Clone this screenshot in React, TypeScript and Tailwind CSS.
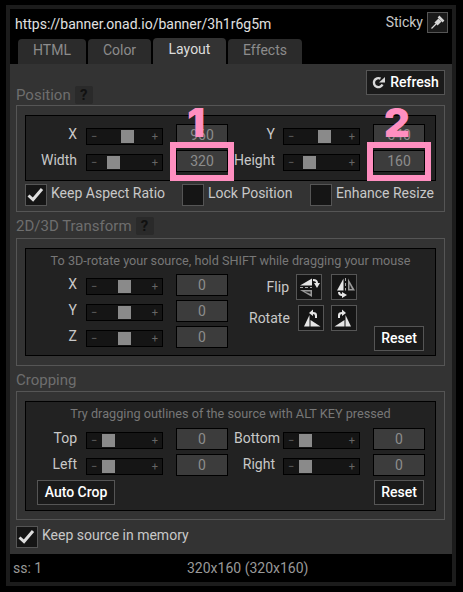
function Slider({ thumb }: { thumb: string }) {
  return (
    <div className="relative mt-[4px] flex h-[17px] w-[77px] items-center justify-between border border-black bg-[#151515] px-[4px] text-[11px] leading-none text-[#666]">
      <span>−</span>
      <span>+</span>
      <div className={`absolute top-[1px] h-[13px] w-[13px] bg-[#8a8a8a] ${thumb}`} />
    </div>
  );
}

function NumBox({ value }: { value: string }) {
  return (
    <div className="flex h-[22px] w-[52px] items-center justify-center border border-black bg-[#3c3c3c] text-[14px] text-[#8c8c8c]">
      {value}
    </div>
  );
}

function Label({ text, className = "w-[51px]" }: { text: string; className?: string }) {
  return <div className={`flex h-[20px] items-center justify-end text-[14px] leading-none whitespace-nowrap text-[#c8c8c8] ${className}`}>{text}</div>;
}

function Row({ label, thumb, value }: { label: string; thumb: string; value: string }) {
  return (
    <div className="flex h-[26px] items-start">
      <Label text={label} />
      <div className="ml-[9px]"><Slider thumb={thumb} /></div>
      <div className="ml-[13px]"><NumBox value={value} /></div>
    </div>
  );
}

function PairRow({ left, right, labelClass = "w-[47px]" }: { left: [string, string, string]; right: [string, string, string]; labelClass?: string }) {
  return (
    <div className="flex h-[26px] items-start">
      <Label text={left[0]} />
      <div className="ml-[9px]"><Slider thumb={left[1]} /></div>
      <div className="ml-[13px]"><NumBox value={left[2]} /></div>
      <Label text={right[0]} className={labelClass} />
      <div className="ml-[8px]"><Slider thumb={right[1]} /></div>
      <div className="ml-[13px]"><NumBox value={right[2]} /></div>
    </div>
  );
}

function Check({ checked, label }: { checked?: boolean; label: string }) {
  return (
    <div className="flex items-center gap-[4px]">
      <div className="h-[22px] w-[22px] border border-[#555] bg-[#151515]">
        {checked && (
          <svg viewBox="1 1 20 20" className="h-[20px] w-[20px]" fill="none" stroke="#dedede" strokeWidth="3">
            <path d="M3.5 11.5 L8 15.5 L17 5" />
          </svg>
        )}
      </div>
      <span className="pb-[2px] text-[14px] text-[#c8c8c8]">{label}</span>
    </div>
  );
}

function Btn({ children, className = "" }: { children: React.ReactNode; className?: string }) {
  return (
    <div className={`flex h-[25px] items-center justify-center border border-[#555] bg-[#1a1a1a] pb-[1px] text-[14px] font-medium text-white ${className}`}>
      {children}
    </div>
  );
}

function SectionLabel({ text, help }: { text: string; help?: boolean }) {
  return (
    <div className="flex h-[20px] items-center gap-[4px] text-[15px] leading-none text-[#6e6e6e]">
      {text}
      {help && <span className="flex h-[18px] w-[18px] items-center justify-center rounded-[2px] bg-[#2a2a2a] text-[15px] font-bold text-[#111]">?</span>}
    </div>
  );
}

function FlipIcon({ kind }: { kind: number }) {
  const paths = [
    <g key="a" fill="#e6e6e6">
      <path d="M4 11.5 L16 4.5 V11.5 Z" />
      <path d="M4 13 H7 V14 H4 Z M9 13 H12 V14 H9 Z M14 13 H16 V14 H14 Z" fill="#aaa" />
      <path d="M4 16 H16 V23 Z" fill="#999" />
      <path d="M8.5 17.5 H14.5 V20 Z" fill="#222" />
      <path d="M17 5 Q22 5 22 9 H24 L21 14 L18 9 H20 Q20 7 17 7 Z" />
    </g>,
    <g key="b" fill="#e6e6e6">
      <path d="M6 16.5 L12.5 4.5 V16.5 Z" />
      <path d="M14 4 H15 V7 H14 Z M14 9 H15 V12 H14 Z M14 14 H15 V16.5 H14 Z" fill="#aaa" />
      <path d="M17 4.5 L24 16.5 H17 Z" fill="#999" />
      <path d="M18.5 10 L21 15 H18.5 Z" fill="#222" />
      <path d="M7 18 Q7 22 11 22 V24 L16 21 L11 18 V20 Q9 20 9 18 Z" />
    </g>,
    <g key="c" fill="#e6e6e6">
      <path d="M6 21.5 L11.5 10 V21.5 Z" />
      <path d="M12.5 15 L22.5 21.5 H12.5 Z" />
      <path d="M19 13 V10 Q19 7 15 7 V4.5 L11 8 L15 11 V9 Q17 9 17 11 V13 Z" />
    </g>,
    <g key="d" fill="#e6e6e6">
      <path d="M20 21.5 L14.5 10 V21.5 Z" />
      <path d="M13.5 15 L3.5 21.5 H13.5 Z" />
      <path d="M7 13 V10 Q7 7 11 7 V4.5 L15 8 L11 11 V9 Q9 9 9 11 V13 Z" />
    </g>,
  ];
  return (
    <div className="h-[26px] w-[26px] border border-[#555] bg-[#151515]">
      <svg viewBox="1 1 24 24" className="h-[24px] w-[24px]">{paths[kind]}</svg>
    </div>
  );
}

export default function App() {
  return (
    <div className="h-[592px] w-[463px] overflow-hidden bg-black pl-[6px] pt-[5px] font-['Roboto',sans-serif]">
      <div className="relative flex h-[581px] w-[450px] flex-col border-4 border-[#1c1c1c] bg-[#333]">
        {/* header */}
        <div className="relative h-[55px] bg-black">
          <div className="absolute left-[5px] top-[5px] text-[14px] text-[#e0e0e0]">https://banner.onad.io/banner/3h1r6g5m</div>
          <div className="absolute right-[4px] top-[3px] flex items-center gap-[4px]">
            <span className="text-[14px] text-[#c8c8c8]">Sticky</span>
            <div className="h-[21px] w-[21px] border border-[#555] bg-[#1a1a1a]">
              <svg viewBox="0 0 19 19" className="h-[19px] w-[19px]" fill="none" stroke="#d8d8d8">
                <path d="M3.5 15.5 L8 11" strokeWidth="1.3" />
                <path d="M8 11 L12 7" strokeWidth="4.5" />
                <path d="M10.5 3.5 L15.5 8.5" strokeWidth="2.5" />
              </svg>
            </div>
          </div>
          <div className="absolute bottom-0 left-[8px] flex items-end gap-[2px] text-[14px]">
            <div className="flex h-[25px] w-[68px] items-center justify-center rounded-t-[4px] bg-[#2b2b2b] pb-[2px] text-[#8c8c8c]">HTML</div>
            <div className="flex h-[25px] w-[63px] items-center justify-center rounded-t-[4px] bg-[#2b2b2b] pb-[2px] text-[#8c8c8c]">Color</div>
            <div className="flex h-[26px] w-[73px] items-center justify-center rounded-t-[4px] bg-[#333] pb-[3px] text-[#dcdcdc]">Layout</div>
            <div className="flex h-[25px] w-[74px] items-center justify-center rounded-t-[4px] bg-[#2b2b2b] pb-[2px] text-[#8c8c8c]">Effects</div>
          </div>
        </div>

        {/* content */}
        <div className="flex flex-1 flex-col pl-[6px] pr-[7px]">
          <div className="flex h-[41px] items-end justify-between pt-[6px]">
            <SectionLabel text="Position" help />
            <Btn className="mb-[10px] w-[79px] gap-[5px] self-start">
              <svg viewBox="0 0 13 13" className="h-[13px] w-[13px]" fill="none" stroke="#d8d8d8" strokeWidth="2.4">
                <path d="M10.5 8.5 A4.5 4.5 0 1 1 8.5 2.6" />
                <path d="M7 6.5 H13 V1 Z" fill="#d8d8d8" stroke="none" />
              </svg>
              Refresh
            </Btn>
          </div>

          <div className="h-[107px] border border-[#555] px-[8px] pt-[9px]">
            <div className="h-[66px] border border-black bg-[#222] pt-[8px]">
              <PairRow left={["X", "left-[34px]", "960"]} right={["Y", "left-[34px]", "540"]} />
              <PairRow left={["Width", "left-[20px]", "320"]} right={["Height", "left-[19px]", "160"]} />
            </div>
            <div className="mt-[2px] flex">
              <div className="w-[157px]"><Check checked label="Keep Aspect Ratio" /></div>
              <div className="w-[128px]"><Check label="Lock Position" /></div>
              <Check label="Enhance Resize" />
            </div>
          </div>

          <div className="mt-[4px]"><SectionLabel text="2D/3D Transform" help /></div>
          <div className="mt-[2px] h-[128px] border border-[#555] px-[8px] pt-[9px]">
            <div className="relative h-[108px] border border-black bg-[#222]">
              <div className="pt-[2px] text-center text-[12.65px] leading-[20px] text-[#777]">To 3D-rotate your source, hold SHIFT while dragging your mouse</div>
              <div className="mt-[3px]">
                <Row label="X" thumb="left-[31px]" value="0" />
                <Row label="Y" thumb="left-[31px]" value="0" />
                <Row label="Z" thumb="left-[31px]" value="0" />
              </div>
              <div className="absolute left-[223px] top-[25px] flex flex-col gap-[5px]">
                <div className="flex items-center">
                  <span className="w-[40px] text-right text-[14px] text-[#c8c8c8]">Flip</span>
                  <div className="ml-[7px]"><FlipIcon kind={0} /></div>
                  <div className="ml-[9px]"><FlipIcon kind={1} /></div>
                </div>
                <div className="flex items-center">
                  <span className="w-[40px] text-right text-[14px] text-[#c8c8c8]">Rotate</span>
                  <div className="ml-[9px]"><FlipIcon kind={2} /></div>
                  <div className="ml-[7px]"><FlipIcon kind={3} /></div>
                </div>
              </div>
              <Btn className="absolute right-[11px] bottom-[4px] w-[50px]">Reset</Btn>
            </div>
          </div>

          <div className="mt-[4px]"><SectionLabel text="Cropping" /></div>
          <div className="mt-[1px] h-[129px] border border-[#555] px-[8px] pt-[9px]">
            <div className="h-[110px] border border-black bg-[#222]">
              <div className="pt-[2px] text-center text-[12.7px] leading-[20px] text-[#777]">Try dragging outlines of the source with ALT KEY pressed</div>
              <div className="mt-[4px]">
                <PairRow left={["Top", "left-[15px]", "0"]} right={["Bottom", "left-[15px]", "0"]} labelClass="w-[47px] translate-x-[5px]" />
                <PairRow left={["Left", "left-[15px]", "0"]} right={["Right", "left-[15px]", "0"]} />
              </div>
              <div className="flex justify-between pl-[11px] pr-[11px]">
                <Btn className="w-[78px]">Auto Crop</Btn>
                <Btn className="w-[50px]">Reset</Btn>
              </div>
            </div>
          </div>

          <div className="mt-[5px]"><Check checked label="Keep source in memory" /></div>
        </div>

        {/* footer */}
        <div className="relative flex h-[28px] items-center bg-black pl-[3px] text-[14px] text-[#999]">
          <span>ss: 1</span>
          <span className="absolute left-[177px]">320x160 (320x160)</span>
        </div>

        {/* pink callouts */}
        <div className="absolute left-[160px] top-[133px] h-[39px] w-[64px] border-[6px] border-[#ff8fc0]" />
        <div className="absolute left-[357px] top-[133px] h-[39px] w-[64px] border-[6px] border-[#ff8fc0]" />
        <div className="absolute left-[177px] top-[90px] font-['Inter',sans-serif] text-[40px] leading-[48px] font-black text-[#ff8fc0]">1</div>
        <div className="absolute left-[374px] top-[90px] font-['Inter',sans-serif] text-[40px] leading-[48px] font-black text-[#ff8fc0]">2</div>
      </div>
    </div>
  );
}
